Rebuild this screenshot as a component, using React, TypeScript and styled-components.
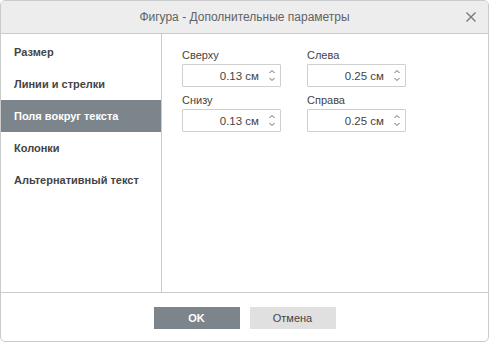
import React from "react";
import styled, { createGlobalStyle } from "styled-components";

const Global = createGlobalStyle`
  html, body { margin: 0; padding: 0; background: #ffffff; }
  body { font-family: "Liberation Sans", Arial, sans-serif; font-size: 11px; color: #444; }
  * { box-sizing: border-box; }
`;

const Dialog = styled.div`
  width: 489px;
  height: 342px;
  border: 1px solid #cbcbcb;
  border-radius: 5px;
  display: flex;
  flex-direction: column;
  overflow: hidden;
  background: #fff;
`;

const Header = styled.div`
  height: 33px;
  flex: none;
  background: #ededed;
  border-bottom: 1px solid #cbcbcb;
  display: flex;
  align-items: center;
  justify-content: center;
  position: relative;
`;

const Title = styled.div`
  font-size: 12px;
  color: #636363;
  font-weight: normal;
`;

const Close = styled.div`
  position: absolute;
  right: 11px;
  top: 10px;
  width: 12px;
  height: 12px;
  display: flex;
`;

const Body = styled.div`
  flex: 1;
  display: flex;
  min-height: 0;
`;

const Sidebar = styled.div`
  width: 161px;
  flex: none;
  border-right: 1px solid #cbcbcb;
  padding-top: 2px;
  display: flex;
  flex-direction: column;
`;

const SideItem = styled.div<{ $active?: boolean }>`
  height: 32px;
  display: flex;
  align-items: center;
  padding-left: 13px;
  font-weight: bold;
  font-size: 11px;
  color: ${(p) => (p.$active ? "#fff" : "#444")};
  background: ${(p) => (p.$active ? "#7d858c" : "transparent")};
`;

const Content = styled.div`
  flex: 1;
  padding: 14px 0 0 20px;
  display: grid;
  grid-template-columns: 99px 99px;
  column-gap: 26px;
  row-gap: 6px;
  align-content: start;
`;

const Field = styled.div`
  display: flex;
  flex-direction: column;
`;

const Label = styled.div`
  height: 14px;
  line-height: 14px;
  margin-bottom: 2px;
  color: #444;
`;

const SpinBox = styled.div`
  height: 23px;
  border: 1px solid #cfcfcf;
  border-radius: 1px;
  display: flex;
  align-items: center;
`;

const Value = styled.div`
  flex: 1;
  text-align: right;
  padding-right: 8px;
  font-size: 11.5px;
  color: #444;
`;

const Arrows = styled.div`
  width: 9px;
  margin-right: 4px;
  display: flex;
  flex-direction: column;
  align-items: center;
  gap: 5px;
`;

const Footer = styled.div`
  height: 49px;
  flex: none;
  border-top: 1px solid #cbcbcb;
  display: flex;
  justify-content: center;
  align-items: flex-start;
  padding-top: 14px;
  gap: 10px;
`;

const Button = styled.div<{ $primary?: boolean }>`
  width: 86px;
  height: 22px;
  display: flex;
  align-items: center;
  justify-content: center;
  font-size: 11px;
  font-weight: ${(p) => (p.$primary ? "bold" : "normal")};
  background: ${(p) => (p.$primary ? "#7d858c" : "#e0e0e0")};
  color: ${(p) => (p.$primary ? "#fff" : "#444")};
`;

const Chevron = ({ up }: { up?: boolean }) => (
  <svg width="6" height="3" viewBox="0 0 6 3" style={{ display: "block" }}>
    <path
      d={up ? "M0.5 3 L3 0.5 L5.5 3" : "M0.5 0 L3 2.5 L5.5 0"}
      fill="none"
      stroke="#666"
      strokeWidth="1"
    />
  </svg>
);

const Spin = ({ value }: { value: string }) => (
  <SpinBox>
    <Value>{value}</Value>
    <Arrows>
      <Chevron up />
      <Chevron />
    </Arrows>
  </SpinBox>
);

const items = ["Размер", "Линии и стрелки", "Поля вокруг текста", "Колонки", "Альтернативный текст"];

const fields = [
  { label: "Сверху", value: "0.13 см" },
  { label: "Слева", value: "0.25 см" },
  { label: "Снизу", value: "0.13 см" },
  { label: "Справа", value: "0.25 см" },
];

export default function App() {
  return (
    <>
      <Global />
      <Dialog>
        <Header>
          <Title>Фигура - Дополнительные параметры</Title>
          <Close>
            <svg width="12" height="12" viewBox="0 0 12 12">
              <path d="M1.5 1.5 L10.5 10.5 M10.5 1.5 L1.5 10.5" stroke="#777" strokeWidth="1.4" />
            </svg>
          </Close>
        </Header>
        <Body>
          <Sidebar>
            {items.map((it, i) => (
              <SideItem key={it} $active={i === 2}>
                {it}
              </SideItem>
            ))}
          </Sidebar>
          <Content>
            {fields.map((f) => (
              <Field key={f.label}>
                <Label>{f.label}</Label>
                <Spin value={f.value} />
              </Field>
            ))}
          </Content>
        </Body>
        <Footer>
          <Button $primary>OK</Button>
          <Button>Отмена</Button>
        </Footer>
      </Dialog>
    </>
  );
}
